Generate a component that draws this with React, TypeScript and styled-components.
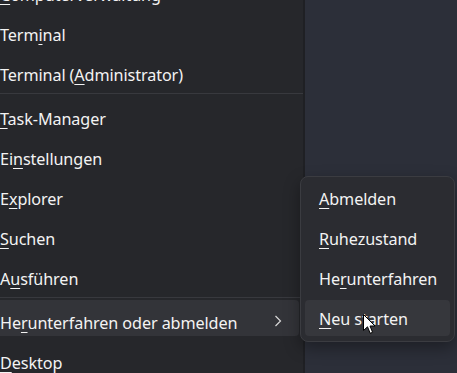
import React from "react";
import styled, { createGlobalStyle } from "styled-components";

const Global = createGlobalStyle`
  html, body {
    margin: 0;
    padding: 0;
    background: #2c2f39;
    overflow: hidden;
  }
  body {
    font-family: "Noto Sans", "Segoe UI", sans-serif;
  }
`;

const Screen = styled.div`
  position: relative;
  width: 457px;
  height: 373px;
  overflow: hidden;
  display: flex;
  align-items: flex-start;
  background: #2c2f39;
`;

const Menu = styled.div`
  width: 323px;
  margin-left: -20px;
  margin-top: -34px;
  padding: 4px 0;
  background: #26272b;
  border-right: 2px solid #1f2024;
  display: flex;
  flex-direction: column;
  flex-shrink: 0;
  height: 460px;
`;

const Item = styled.div<{ $active?: boolean }>`
  position: relative;
  height: 36px;
  margin: 2px 4px;
  padding: 0 16px;
  box-sizing: border-box;
  border-radius: 4px;
  display: flex;
  align-items: center;
  justify-content: space-between;
  color: #f3f3f3;
  font-size: 16.2px;
  letter-spacing: -0.1px;
  background: ${(p) => (p.$active ? "#333439" : "transparent")};
`;

const Label = styled.span`
  padding-top: 9px;
  white-space: nowrap;
`;

const Key = styled.span`
  text-decoration: underline;
  text-decoration-thickness: 1px;
  text-underline-offset: 3px;
`;

const Separator = styled.div`
  height: 1px;
  margin: 3px 0 0;
  background: #38393e;
`;

const Chevron = styled.svg`
  width: 8px;
  height: 12px;
  margin-right: 1px;
  margin-top: 6px;
`;

const Flyout = styled.div`
  position: absolute;
  left: 300px;
  top: 176px;
  width: 155px;
  padding: 1px 0 3px;
  box-sizing: border-box;
  background: #2b2c31;
  border: 1px solid #3b3c41;
  border-radius: 8px;
  box-shadow: 0 6px 16px rgba(0, 0, 0, 0.35);
  display: flex;
  flex-direction: column;
`;

const SubItem = styled(Item)`
  margin: 2px 4px;
  padding: 0 14px;
  background: ${(p) => (p.$active ? "#36373c" : "transparent")};
`;

const SubLabel = styled.span`
  padding-top: 2px;
  white-space: nowrap;
`;

const Cursor = styled.svg`
  position: absolute;
  left: 363px;
  top: 314px;
  width: 13px;
  height: 21px;
`;

type Entry = { pre: string; key: string; post: string };

const top: Entry[] = [
  { pre: "", key: "C", post: "omputerverwaltung" },
  { pre: "Term", key: "i", post: "nal" },
  { pre: "Terminal (", key: "A", post: "dministrator)" },
];
const middle: Entry[] = [
  { pre: "", key: "T", post: "ask-Manager" },
  { pre: "Ei", key: "n", post: "stellungen" },
  { pre: "E", key: "x", post: "plorer" },
  { pre: "", key: "S", post: "uchen" },
  { pre: "A", key: "u", post: "sführen" },
];
const sub: Entry[] = [
  { pre: "", key: "A", post: "bmelden" },
  { pre: "", key: "R", post: "uhezustand" },
  { pre: "He", key: "r", post: "unterfahren" },
  { pre: "", key: "N", post: "eu starten" },
];

const Text = ({ e }: { e: Entry }) => (
  <>
    {e.pre}
    <Key>{e.key}</Key>
    {e.post}
  </>
);

export default function App() {
  return (
    <>
      <Global />
      <Screen>
        <Menu>
          {top.map((e) => (
            <Item key={e.pre + e.key}>
              <Label>
                <Text e={e} />
              </Label>
            </Item>
          ))}
          <Separator />
          {middle.map((e) => (
            <Item key={e.pre + e.key}>
              <Label>
                <Text e={e} />
              </Label>
            </Item>
          ))}
          <Separator />
          <Item $active>
            <Label>
              He<Key>r</Key>unterfahren oder abmelden
            </Label>
            <Chevron viewBox="0 0 8 12">
              <path d="M1.5 1 L6.5 6 L1.5 11" fill="none" stroke="#d8d8d8" strokeWidth="1.2" />
            </Chevron>
          </Item>
          <Item>
            <Label>
              <Key>D</Key>esktop
            </Label>
          </Item>
        </Menu>
        <Flyout>
          {sub.map((e, i) => (
            <SubItem key={e.post} $active={i === 3}>
              <SubLabel>
                <Text e={e} />
              </SubLabel>
            </SubItem>
          ))}
        </Flyout>
        <Cursor viewBox="0 0 13 21">
          <path
            d="M0.5 0.5 L0.5 16.5 L4.5 12.8 L7.2 19.3 L9.6 18.3 L7 12 L12 12 Z"
            fill="#ffffff"
            stroke="#000000"
            strokeWidth="1"
            strokeLinejoin="round"
          />
        </Cursor>
      </Screen>
    </>
  );
}
